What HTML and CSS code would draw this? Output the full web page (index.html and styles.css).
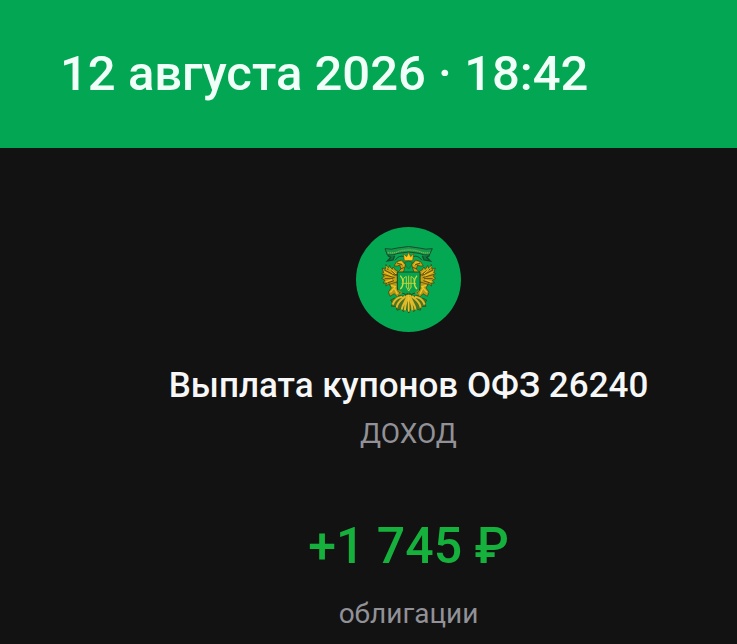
FILE: index.html
```html
<!DOCTYPE html>
<html lang="ru">
<head>
<meta charset="utf-8">
<meta name="viewport" content="width=device-width, initial-scale=1">
<title>Выплата купонов</title>
<link rel="stylesheet" href="styles.css">
</head>
<body>
<header class="date-bar">
  <time datetime="2026-08-12T18:42">12 августа 2026 · 18:42</time>
</header>
<main class="operation">
  <svg class="emblem" viewBox="18 22 315 315" aria-hidden="true">
    <defs>
      <g id="wing">
        <path d="M167 135 L155 121 L140 126 L132 139 L142 139 L149 136 L153 148 L145 156 L136 151 L130 142 L125 151 L119 137 L114 150 L108 134 L106 149 L96 145 L101 159 L95 162 L103 170 L95 176 L105 182 L99 190 L110 190 L107 199 L118 192 L122 200 L134 194 L143 184 L141 163 L160 158 Z" fill="#c9a014" stroke="#3a3f10" stroke-width="2"/>
        <path d="M103 151 L137 168 M99 164 L134 174 M104 177 L130 177 M112 147 L140 167 M123 153 L144 168 M141 130 L158 136 M151 148 L164 143 M112 190 L132 183" fill="none" stroke="#604b0c" stroke-width="3"/>
        <path d="M108 140 L130 163 M119 145 L138 163 M102 156 L127 169 M107 187 L126 180 M145 129 L154 127 L161 138" fill="none" stroke="#f3c823" stroke-width="3"/>
        <path d="M118 194 L140 187 L144 197 L142 208 L150 220 L143 233 L133 222 L120 230 L115 217 L124 205 Z" fill="#b5991b" stroke="#3a3f10" stroke-width="2"/>
        <path d="M123 197 L136 201 L121 218 M134 207 L142 223" fill="none" stroke="#f0c825" stroke-width="4"/>
      </g>
      <g id="tail">
        <path d="M174 220 L161 229 L148 228 L146 238 L134 235 L122 241 L127 250 L124 260 L138 261 L141 272 L154 267 L160 276 L169 268 L176 280 Z" fill="#4c7420" stroke="#2d4a14" stroke-width="2"/>
        <path d="M172 226 C170 244 157 254 155 270 M166 229 C157 240 142 244 140 264 M157 231 C143 233 132 242 128 255 M175 232 C169 248 164 257 165 272" fill="none" stroke="#e0ba2a" stroke-width="6"/>
      </g>
    </defs>
    <circle cx="175.500" cy="179.500" r="157.500" fill="#05a852"/>
    <path d="M105 87 Q126 91 142 85 Q176 76 208 85 Q227 91 247 87 L238 106 Q222 108 207 101 Q177 93 144 101 Q130 108 112 106 Z" fill="#159a4c" stroke="#164c2c" stroke-width="3"/>
    <path d="M113 99 Q135 102 146 95 Q177 87 207 95 Q222 102 239 99" fill="none" stroke="#7fb451" stroke-width="4" stroke-dasharray="4 2"/>
    <path d="M113 107 L122 113 L112 124 L129 121 L134 108 M239 107 L230 113 L241 124 L222 121 L217 108" fill="#087c3b" stroke="#164c2c" stroke-width="4"/>
    <path d="M135 122 Q147 105 163 111 M216 122 Q204 105 188 111" fill="none" stroke="#164c2c" stroke-width="3"/>
    <use href="#wing"/>
    <use href="#wing" transform="translate(352 0) scale(-1 1)"/>
    <path d="M163 123 L160 102 L170 111 L176 98 L182 111 L191 102 L188 123 Z" fill="#ffc51d" stroke="#5c4e0d" stroke-width="2"/>
    <path d="M164 128 L176 124 L187 128 L183 140 L176 148 L168 140 Z" fill="#07994a" stroke="#1c5a2b" stroke-width="2"/>
    <path d="M142 157 H210 V205 Q210 215 199 218 L176 228 L152 218 Q142 215 142 205 Z" fill="#08a34d" stroke="#174f28" stroke-width="3"/>
    <path d="M151 168 Q159 177 159 188 Q159 202 151 208 M201 168 Q193 177 193 188 Q193 202 201 208" fill="none" stroke="#cdda3b" stroke-width="4"/>
    <path d="M159 188 Q160 171 169 171 V203 M183 203 V171 Q192 171 193 188 M155 191 H198 M176 168 V208 M169 201 L176 214 L184 201" fill="none" stroke="#bed13a" stroke-width="3"/>
    <path d="M145 212 L155 219 L146 226 M207 212 L197 219 L206 226" fill="none" stroke="#87901c" stroke-width="4"/>
    <use href="#tail"/>
    <use href="#tail" transform="translate(352 0) scale(-1 1)"/>
    <path d="M176 225 V276" stroke="#f0c229" stroke-width="5"/>
  </svg>
  <h1 class="title">Выплата купонов ОФЗ 26240</h1>
  <p class="kind">ДОХОД</p>
  <p class="amount">+1 745 ₽</p>
  <p class="category">облигации</p>
</main>
</body>
</html>
```
FILE: styles.css
```css
* {
  box-sizing: border-box;
}

body {
  margin: 0;
  background: #121212;
  color: #f7f7f7;
  font-family: Roboto, "Noto Sans", sans-serif;
}

.date-bar {
  padding: 36px 60px;
  background: #03a653;
  color: #f0fff8;
  font-size: 49px;
  font-weight: 500;
  line-height: 76px;
  white-space: nowrap;
}

.date-bar time {
  display: block;
}

.operation {
  display: flex;
  flex-direction: column;
  align-items: center;
  padding: 79px 0 0 80px;
  text-align: center;
  white-space: nowrap;
}

.emblem {
  width: 105px;
  height: 105px;
}

.title,
.kind,
.amount,
.category {
  margin: 0;
}

.title {
  margin-top: 28px;
  font-size: 35px;
  font-weight: 500;
  line-height: 52px;
}

.kind {
  color: #919197;
  font-size: 28px;
  line-height: 44px;
}

.amount {
  margin-top: 52px;
  color: #16b13c;
  font-size: 50px;
  font-weight: 500;
  line-height: 76px;
}

.category {
  margin-top: 8px;
  color: #919197;
  font-size: 28px;
  line-height: 44px;
}
```
